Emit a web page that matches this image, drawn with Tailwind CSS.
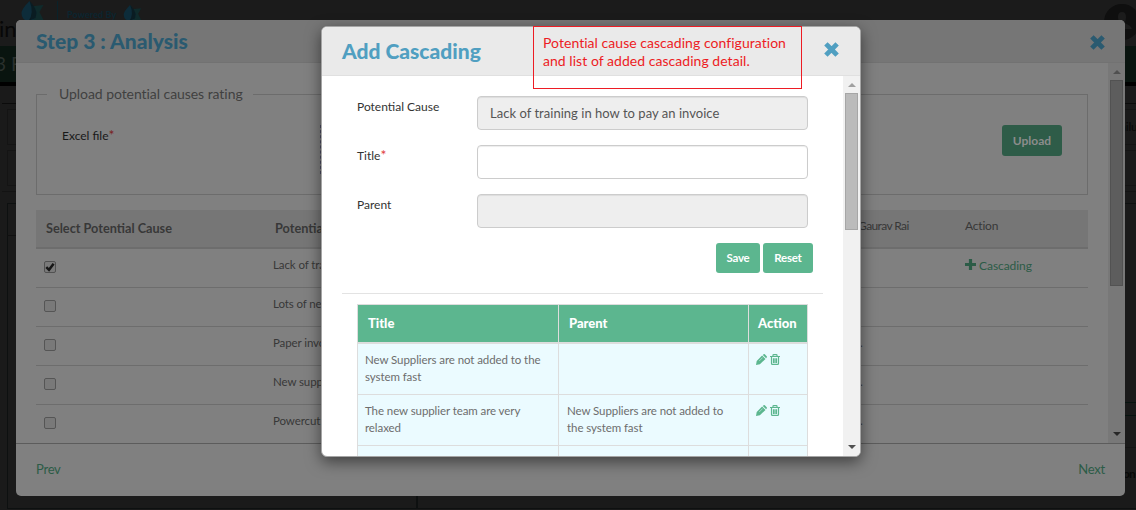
<!DOCTYPE html>
<html lang="en">
<head>
<meta charset="utf-8">
<title>Step 3 : Analysis</title>
<script src="https://cdn.jsdelivr.net/npm/@tailwindcss/browser@4"></script>
</head>
<body class="relative h-[510px] w-[1136px] overflow-hidden bg-[#1a1a1a] font-['Lato',sans-serif]">

<svg width="0" height="0" class="absolute">
  <symbol id="close" viewBox="0 0 14 14"><path fill="none" stroke="currentColor" stroke-width="4.4" stroke-linecap="square" d="M3.3 3.3l7.4 7.4M10.700 3.300l-7.400 7.400"/></symbol>
  <symbol id="pencil" viewBox="0 0 11 11"><path fill="currentColor" d="M0 11l.7-3.900L6.100 1.500 9.500 4.900 3.900 10.300zM6.800 .9L7.600.2Q8.200-.2 8.800.3L10.700 2.200Q11.200 2.800 10.700 3.400L10.100 4.200z"/><path stroke="#ebfbff" stroke-width=".5" d="M3.200 7l3.500-3.500"/></symbol>
  <symbol id="trash" viewBox="0 0 10 11"><path fill="none" stroke="currentColor" stroke-width="1.2" d="M0 2.500h10M3 2.500v-1.200Q3 .6 3.800.6h2.400Q7 .6 7 1.300v1.200M1.500 2.500v7q0 .9 1 .9h5q1 0 1-.9v-7M3.500 4.200v4.800M5 4.200v4.800M6.500 4.200v4.800"/></symbol>
  <symbol id="drop" viewBox="0 0 22 20"><path fill="#0f2a2b" d="M8 6l5-1 9-1-4 7 4 8-9 1H7z"/><path fill="#0d2c3a" d="M8 0Q0 8 0 12q0 7 7 8 8-1 8-8Q14 7 8 0z"/><path fill="#0a1c22" d="M8 0q6 6 7 12l-1 5-7 3q6-8 1-20z"/></symbol>
</svg>

<!-- Dimmed page behind the dialogs -->
<div class="absolute inset-0 overflow-hidden text-[#080808]">
  <div class="h-[46px] bg-[#1b1b1b]"></div>
  <div class="h-9 bg-[#09140f]"></div>
  <div class="h-1 bg-black"></div>
  <div class="absolute top-[17px] left-[-1px] text-[22px] leading-6 text-[#070707]">in</div>
  <div class="absolute top-[52px] left-[-5px] text-[19px] leading-6 whitespace-pre text-[#2a302d]">3 F</div>
  <svg class="absolute top-[1px] left-[21px] h-5 w-[23px]"><use href="#drop"/></svg>
  <div class="absolute top-[1px] left-[57px] h-[19px] w-px bg-[#0a222a]"></div>
  <div class="absolute top-[9px] left-[67px] text-[9px] leading-3 font-bold tracking-[0.1px] text-[#0b2530]">Powered By</div>
  <svg class="absolute top-[5px] left-[123px] h-4 w-[19px]"><use href="#drop"/></svg>
  <svg class="absolute top-[4px] left-[1104px] size-9" viewBox="0 0 36 36"><circle cx="18" cy="18" r="18" fill="#0f0f0f"/><path fill="#1c1c1c" d="M14 13q0-5 4-5t4 5q0 4-2 6 7 2 8 6H8q1-4 8-6-2-2-2-6z"/></svg>
  <div class="absolute top-[103px] left-[2px] h-px w-[1134px] bg-[#0b0b0b]"></div>
  <div class="absolute top-[109px] left-[7px] h-9 w-[1140px] border border-[#141414]"></div>
  <div class="absolute top-[150px] left-[7px] h-9 w-[1140px] border border-[#141414]"></div>
  <div class="absolute top-[191px] left-[2px] h-px w-[1134px] bg-[#131313]"></div>
  <div class="absolute top-[203px] left-[7px] h-[306px] w-[411px] border border-[#0d1010]"></div>
  <div class="absolute top-[235px] left-[7px] h-px w-[20px] bg-[#101010]"></div>
  <div class="absolute top-[203px] left-[416px] h-[306px] w-[740px] border border-[#0e1010]"></div>
  <div class="absolute top-[402px] left-[1125px] h-[14px] w-[20px] border-y border-[#07130f]"></div>
  <div class="absolute top-[447px] left-[1125px] h-px w-[20px] bg-[#141414]"></div>
  <div class="absolute top-[119px] left-[1120px] text-[12px] leading-4 tracking-[-0.2px]">ailu</div>
  <div class="absolute top-[466px] left-[1123px] text-[12px] leading-4 font-bold tracking-[-0.8px]">on</div>
</div>

<!-- Step dialog -->
<section class="absolute top-[20px] left-[16px] flex h-[476px] w-[1109px] flex-col overflow-hidden rounded-[5px] bg-[#808080]">
  <header class="flex h-[43px] shrink-0 items-center justify-between border-b border-[#727272] bg-[#767676] pr-[20px] pl-[20px] text-[#2a5a70]">
    <h1 class="text-[21px] leading-6 font-black">Step 3 : Analysis</h1>
    <svg class="mt-[3px] size-[15px]"><use href="#close"/></svg>
  </header>
  <div class="flex h-[380px] shrink-0">
    <div class="w-[1092px] overflow-hidden pt-[21px] pl-[20px]">
      <fieldset class="relative mt-[10px] h-[101px] w-[1052px] border border-[#6c6c6c]">
        <div class="absolute top-[-11px] left-[10px] bg-[#808080] pr-[10px] pl-[12px] text-[14px] leading-5 tracking-[-0.06px] text-[#404040]">Upload potential causes rating</div>
        <div class="flex pt-[30px] pr-[25px] pl-[25px]">
          <label class="w-[258px] pt-[3px] text-[12px] leading-4 text-[#191919]">Excel file<span class="text-[14px] leading-3 text-[#7a2222]">*</span></label>
          <div class="h-[49px] w-[400px] border border-dashed border-[#4a4a60]"></div>
          <button class="ml-auto h-[31px] w-[60px] rounded-[3px] bg-[#2e5c48] text-[12px] font-bold text-[#8c8c8c]">Upload</button>
        </div>
      </fieldset>
      <div class="mt-[15px] w-[1052px] text-[#383838]">
        <div class="flex h-[39px] items-center border-b-2 border-[#6d6d6d] bg-[#767676] text-[12.7px] font-bold">
          <div class="w-[239px] pl-[10px]">Select Potential Cause</div>
          <div class="w-[583px]">Potential Cause</div>
          <div class="w-[107px] pb-[5px] text-[12px] font-normal tracking-[-0.6px]">Gaurav Rai</div>
          <div class="pb-[5px] text-[12px] font-normal tracking-[-0.2px]">Action</div>
        </div>
        <div class="text-[11.5px] tracking-[-0.1px]">
          <div class="flex h-[39px] border-b border-[#6d6d6d] pt-[8px]">
            <div class="w-[237px] pt-[4px] pl-[8px]"><div class="size-3 rounded-[2px] border border-[#515151] bg-[#7a7a7a]"><svg viewBox="0 0 10 10" class="size-[10px]"><path d="M1.300 5.200L4 7.800 8.600 1.800" fill="none" stroke="#161616" stroke-width="2.500"/></svg></div></div>
            <div class="w-[692px] leading-4">Lack of training in how to pay an invoice</div>
            <div class="flex items-start gap-[3px] text-[12px] leading-[17px] tracking-[-0.05px] text-[#2c5c47]"><svg class="mt-[2px] size-[11px]" viewBox="0 0 11 11"><path d="M5.500 0v11M0 5.500h11" stroke="currentColor" stroke-width="3.200"/></svg>Cascading</div>
          </div>
          <div class="flex h-[39px] border-b border-[#6d6d6d] pt-[8px]"><div class="w-[237px] pt-[4px] pl-[8px]"><div class="size-3 rounded-[2px] border border-[#555] bg-[#797979]"></div></div><div class="w-[584px] leading-4">Lots of new suppliers</div></div>
          <div class="flex h-[39px] border-b border-[#6d6d6d] pt-[8px]"><div class="w-[237px] pt-[4px] pl-[8px]"><div class="size-3 rounded-[2px] border border-[#555] bg-[#797979]"></div></div><div class="w-[587px] leading-4">Paper invoices</div><div class="leading-4">.</div></div>
          <div class="flex h-[39px] border-b border-[#6d6d6d] pt-[8px]"><div class="w-[237px] pt-[4px] pl-[8px]"><div class="size-3 rounded-[2px] border border-[#555] bg-[#797979]"></div></div><div class="w-[587px] leading-4">New suppliers</div><div class="leading-4">.</div></div>
          <div class="flex h-[39px] pt-[8px]"><div class="w-[237px] pt-[4px] pl-[8px]"><div class="size-3 rounded-[2px] border border-[#555] bg-[#797979]"></div></div><div class="w-[587px] leading-4">Powercut</div><div class="leading-4">.</div></div>
        </div>
      </div>
    </div>
    <div class="flex w-[17px] flex-col items-center bg-[#787878]">
      <svg class="mt-[7px] h-[4px] w-[8px] shrink-0" viewBox="0 0 8 4"><path d="M4 0l4 4H0z" fill="#505050"/></svg>
      <div class="mt-[6px] h-[206px] w-[13px] border border-[#525252] bg-[#5d5d5d]"></div>
      <svg class="mt-auto mb-[7px] h-[4px] w-[8px] shrink-0" viewBox="0 0 8 4"><path d="M0 0h8L4 4z" fill="#282828"/></svg>
    </div>
  </div>
  <footer class="flex grow items-center justify-between border-t border-[#5c5c5c] px-[20px] text-[13px] tracking-[-0.25px] text-[#2c5c47]">
    <span>Prev</span><span>Next</span>
  </footer>
</section>

<!-- Add Cascading dialog -->
<section class="absolute top-[26px] left-[321px] flex h-[431px] w-[540px] flex-col overflow-hidden rounded-[6px] border border-[#a5a5a5] bg-white shadow-[0_5px_15px_rgba(0,0,0,0.5)]">
  <header class="flex h-[49px] shrink-0 items-center justify-between border-b border-[#e0e0e0] bg-[#eaeaea] pr-[21px] pl-[20px] text-[#509fc1]">
    <h2 class="text-[21px] leading-6 font-black">Add Cascading</h2>
    <svg class="mt-[-3px] size-[15px]"><use href="#close"/></svg>
  </header>
  <div class="flex h-[380px] shrink-0">
    <div class="w-[521px] overflow-hidden pt-[20px] text-[12px] text-[#333]">
      <div class="flex flex-col gap-[15px] pl-[35px] leading-4">
        <div class="flex h-[34px]"><label class="w-[120px] pt-[3px]">Potential Cause</label><div class="w-[331px] rounded-[4px] border border-[#ccc] bg-[#eee] px-[12px] text-[13px] leading-[33px] tracking-[0.03px] text-[#555] shadow-[inset_0_1px_1px_rgba(0,0,0,0.075)]">Lack of training in how to pay an invoice</div></div>
        <div class="flex h-[34px]"><label class="w-[120px] pt-[3px]">Title<span class="text-[14px] leading-3 text-[#e04040]">*</span></label><div class="w-[331px] rounded-[4px] border border-[#ccc] bg-white shadow-[inset_0_1px_1px_rgba(0,0,0,0.075)]"></div></div>
        <div class="flex h-[34px]"><label class="w-[120px] pt-[3px]">Parent</label><div class="w-[331px] rounded-[4px] border border-[#ccc] bg-[#eee] shadow-[inset_0_1px_1px_rgba(0,0,0,0.075)]"></div></div>
      </div>
      <div class="mt-[15px] flex justify-end gap-[3px] pr-[30px] text-[11.500px] font-bold tracking-[-0.25px] text-white">
        <button class="h-[30px] w-[44px] rounded-[3px] bg-[#5cb68f]">Save</button>
        <button class="h-[30px] w-[50px] rounded-[3px] bg-[#5cb68f]">Reset</button>
      </div>
      <div class="mt-[20px] ml-[20px] h-px w-[481px] bg-[#e3e3e3]"></div>
      <table class="mt-[10px] ml-[35px] w-[451px] table-fixed border-separate border-spacing-0 border-t border-l border-[#ddd] text-left">
        <colgroup><col class="w-[201px]"><col class="w-[190px]"><col class="w-[59px]"></colgroup>
        <thead><tr class="h-[39px] bg-[#5cb68f] text-[13px] leading-4 text-white">
          <th class="border-r border-b-2 border-[#ddd] p-0 pb-[2px] pl-[10px] font-black">Title</th>
          <th class="border-r border-b-2 border-[#ddd] p-0 pb-[2px] pl-[10px] font-black">Parent</th>
          <th class="border-r border-b-2 border-[#ddd] p-0 pb-[2px] pl-[9px] font-black">Action</th>
        </tr></thead>
        <tbody class="bg-[#ebfbff] text-[11.500px] leading-[17px] tracking-[-0.08px] text-[#6d6d6d]">
          <tr class="h-[51px] align-top">
            <td class="border-r border-b border-[#ddd] px-[7px] pt-[7px] pb-0">New Suppliers are not added to the<br>system fast</td>
            <td class="border-r border-b border-[#ddd]"></td>
            <td class="border-r border-b border-[#ddd] px-[7px] pt-[10px] pb-0"><div class="flex gap-[3px] text-[#5cb68f]"><svg class="size-[11px]"><use href="#pencil"/></svg><svg class="h-[11px] w-[10px]"><use href="#trash"/></svg></div></td>
          </tr>
          <tr class="h-[51px] align-top">
            <td class="border-r border-b border-[#ddd] px-[7px] pt-[7px] pb-0">The new supplier team are very<br>relaxed</td>
            <td class="border-r border-b border-[#ddd] px-[8px] pt-[7px] pb-0">New Suppliers are not added to<br>the system fast</td>
            <td class="border-r border-b border-[#ddd] px-[7px] pt-[10px] pb-0"><div class="flex gap-[3px] text-[#5cb68f]"><svg class="size-[11px]"><use href="#pencil"/></svg><svg class="h-[11px] w-[10px]"><use href="#trash"/></svg></div></td>
          </tr>
          <tr class="h-[51px]"><td class="border-r border-[#ddd]"></td><td class="border-r border-[#ddd]"></td><td class="border-r border-[#ddd]"></td></tr>
        </tbody>
      </table>
    </div>
    <div class="flex w-[17px] flex-col items-center bg-[#f1f1f1]">
      <svg class="mt-[7px] h-[4px] w-[8px] shrink-0" viewBox="0 0 8 4"><path d="M4 0l4 4H0z" fill="#a0a0a0"/></svg>
      <div class="mt-[6px] h-[137px] w-[13px] border border-[#a6a6a6] bg-[#bbb]"></div>
      <svg class="mt-auto mb-[7px] h-[4px] w-[8px] shrink-0" viewBox="0 0 8 4"><path d="M0 0h8L4 4z" fill="#505050"/></svg>
    </div>
  </div>
</section>

<!-- Callout -->
<div class="absolute top-[26px] left-[533px] h-[63px] w-[269px] border border-[#ed1c24] pt-[7px] pl-[9px] text-[14px] leading-[18px] tracking-[0.04px] whitespace-nowrap text-[#ed1c24]">Potential cause cascading configuration<br>and list of added cascading detail.</div>
</body>
</html>
